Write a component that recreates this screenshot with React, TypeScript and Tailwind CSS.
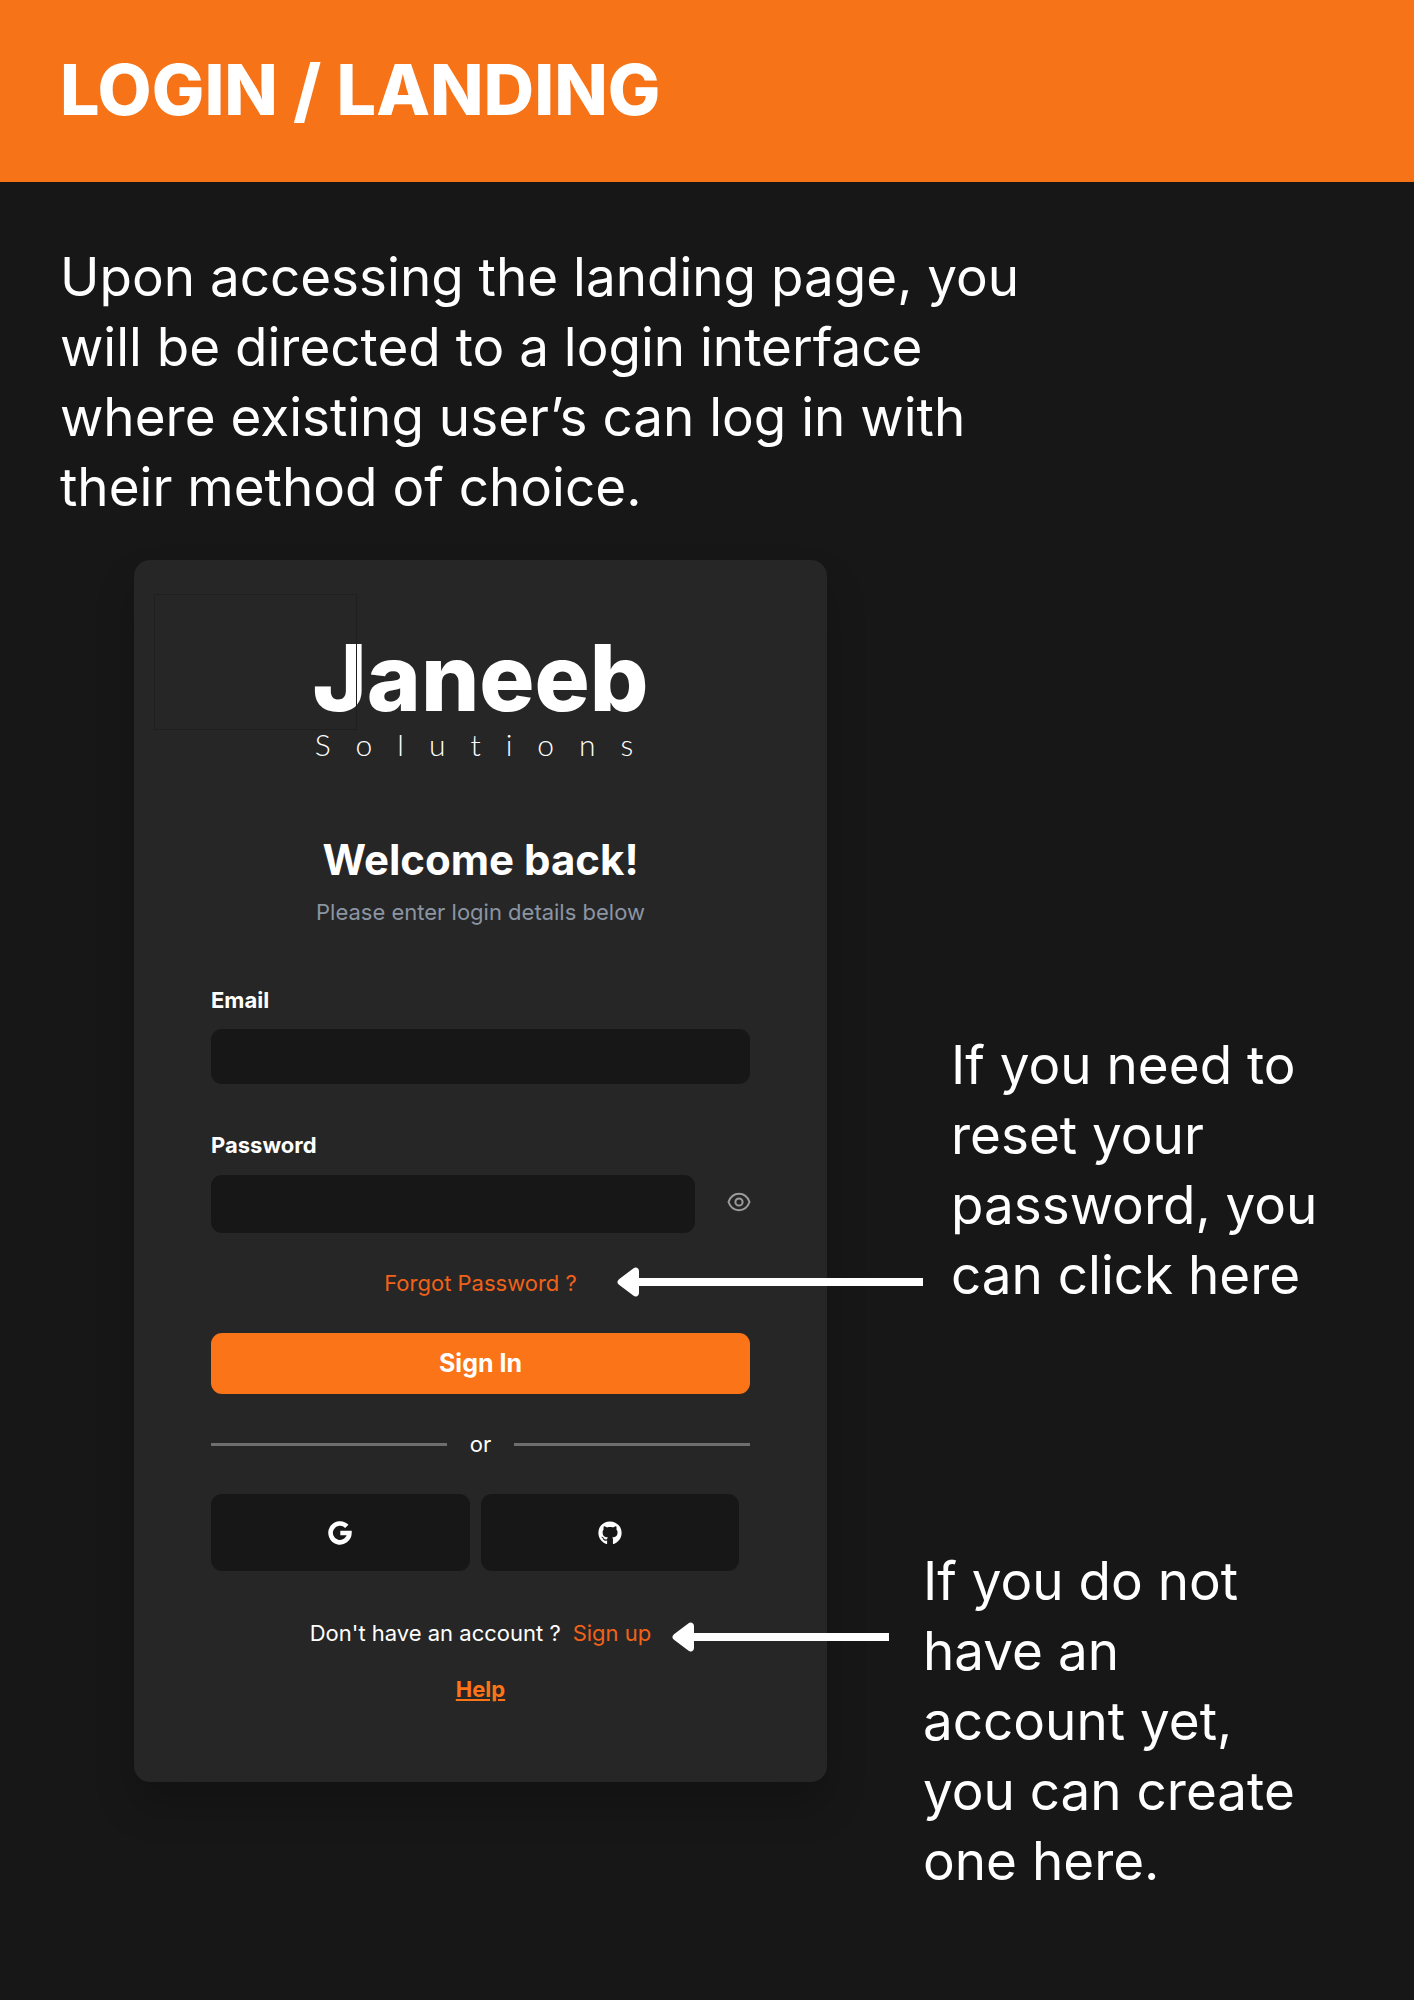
import { useState } from "react";
import type { ReactNode } from "react";
import { FaGithub } from "react-icons/fa";

function ArrowLeft({ className }: { className: string }) {
  return (
    <div aria-hidden="true" className={`flex items-center ${className}`}>
      <svg viewBox="0 0 23 30" className="h-[30px] w-[23px] shrink-0" fill="#fff">
        <path d="M2 12.2 16.6 1.2Q18.2 0 20 .8 22 1.600 22 4V26Q22 28.400 20 29.200 18.200 30 16.600 28.800L2 17.800Q-1.200 15 2 12.200Z" />
      </svg>
      <div className="-ml-1 h-2 grow bg-white" />
    </div>
  );
}

function Note({ className, children }: { className?: string; children: ReactNode }) {
  return <div className={`relative text-[53px] leading-[70px] ${className ?? ""}`}>{children}</div>;
}

function EyeIcon() {
  return (
    <svg viewBox="0 0 24 24" className="h-6 w-6" fill="none" stroke="#9b9b9b" strokeWidth="2">
      <path d="M1.500 12C3.500 6.500 7.500 3.800 12 3.800S20.500 6.500 22.500 12C20.500 17.500 16.500 20.200 12 20.200S3.500 17.500 1.500 12Z" />
      <circle cx="12" cy="12" r="3.600" />
    </svg>
  );
}

function GoogleIcon() {
  return (
    <svg viewBox="0 0 24 24" className="h-6 w-6" fill="none" stroke="#fff" strokeWidth="4.600">
      <path d="M18.800 5.400A9.400 9.400 0 1 0 21.400 12H12.300" />
    </svg>
  );
}

function LoginCard() {
  const [visible, setVisible] = useState(false);
  return (
    <section className="relative w-full max-w-[693px] rounded-2xl bg-[#262626] px-[77px] pb-[79px] shadow-[0_24px_40px_rgba(0,0,0,0.2)]">
      <div className="pt-16 text-center">
        <p className="font-[Inter,sans-serif] text-[92px] leading-[108px] font-extrabold">Janeeb</p>
        <p className="-mr-3 font-[Lato,sans-serif] text-[30px] leading-6 font-light tracking-[25px]">Solutions</p>
      </div>
      <div aria-hidden="true" className="absolute top-[34px] left-5 h-[136px] w-[203px] border border-[#201e1e]" />

      <h2 className="mt-[78px] text-center text-[42px] leading-[52px] font-bold">Welcome back!</h2>
      <p className="mt-3 text-center text-[22px] leading-7 text-[#8b95a3]">Please enter login details below</p>

      <form onSubmit={(event) => event.preventDefault()}>
        <label htmlFor="email" className="mt-[60px] block text-[22px] leading-7 font-bold">
          Email
        </label>
        <input id="email" type="email" className="mt-[15px] block h-[55px] w-full rounded-[11px] bg-[#171717] px-4 text-[22px]" />

        <label htmlFor="password" className="mt-[47px] block text-[22px] leading-7 font-bold">
          Password
        </label>
        <div className="mt-4 flex items-center gap-8">
          <input
            id="password"
            type={visible ? "text" : "password"}
            className="h-[58px] min-w-0 grow rounded-[11px] bg-[#171717] px-4 text-[22px]"
          />
          <button type="button" aria-label="Show password" onClick={() => setVisible(!visible)} className="-mr-px pb-1">
            <EyeIcon />
          </button>
        </div>

        <p className="mt-9 text-center text-[22px] leading-7 text-[#f0621a]">
          <a href="#forgot">Forgot Password ?</a>
        </p>
        <button type="submit" className="mt-9 h-[61px] w-full rounded-[11px] bg-[#fb7417] text-[25px] font-bold">
          Sign In
        </button>
      </form>

      <div className="mt-9 flex items-center gap-[23px] text-[22px] leading-7">
        <div className="h-[3px] grow bg-[#6e6e6e]" />
        <span>or</span>
        <div className="h-[3px] grow bg-[#6e6e6e]" />
      </div>

      <div className="mt-9 mr-[11px] grid grid-cols-2 gap-[11px]">
        <button type="button" aria-label="Sign in with Google" className="flex h-[77px] items-center justify-center rounded-[11px] bg-[#171717]">
          <GoogleIcon />
        </button>
        <button type="button" aria-label="Sign in with GitHub" className="flex h-[77px] items-center justify-center rounded-[11px] bg-[#171717]">
          <FaGithub size={24} />
        </button>
      </div>

      <p className="mt-12 flex justify-center gap-3 text-[22px] leading-7">
        Don't have an account ?
        <a href="#signup" className="text-[#f0621a]">
          Sign up
        </a>
      </p>
      <p className="mt-7 text-center text-[22px] leading-7 font-bold text-[#fb7417]">
        <a href="#help" className="underline">
          Help
        </a>
      </p>
    </section>
  );
}

export default function App() {
  return (
    <div className="min-h-screen bg-[#171717] font-[Inter,sans-serif] text-white">
      <header className="bg-[#f67318] px-[60px] pt-11 pb-[46px]">
        <h1 className="text-[70px] leading-[92px] font-extrabold">LOGIN / LANDING</h1>
      </header>
      <main className="px-[60px] pt-[60px] pb-5">
        <p className="max-w-[980px] text-[53px] leading-[70px]">
          Upon accessing the landing page, you will be directed to a login interface where existing user’s can log in
          with their method of choice.
        </p>
        <div className="mt-[38px] flex items-start gap-24 pl-[74px]">
          <LoginCard />
          <aside className="w-[400px] shrink-0 pt-[470px]">
            <Note className="pl-7">
              If you need to reset your password, you can click here
              <ArrowLeft className="absolute right-full bottom-[13px] w-[306px]" />
            </Note>
            <Note className="mt-[236px]">
              If you do not have an account yet, you can create one here.
              <ArrowLeft className="absolute top-[76px] right-full mr-[34px] w-[217px]" />
            </Note>
          </aside>
        </div>
      </main>
    </div>
  );
}
